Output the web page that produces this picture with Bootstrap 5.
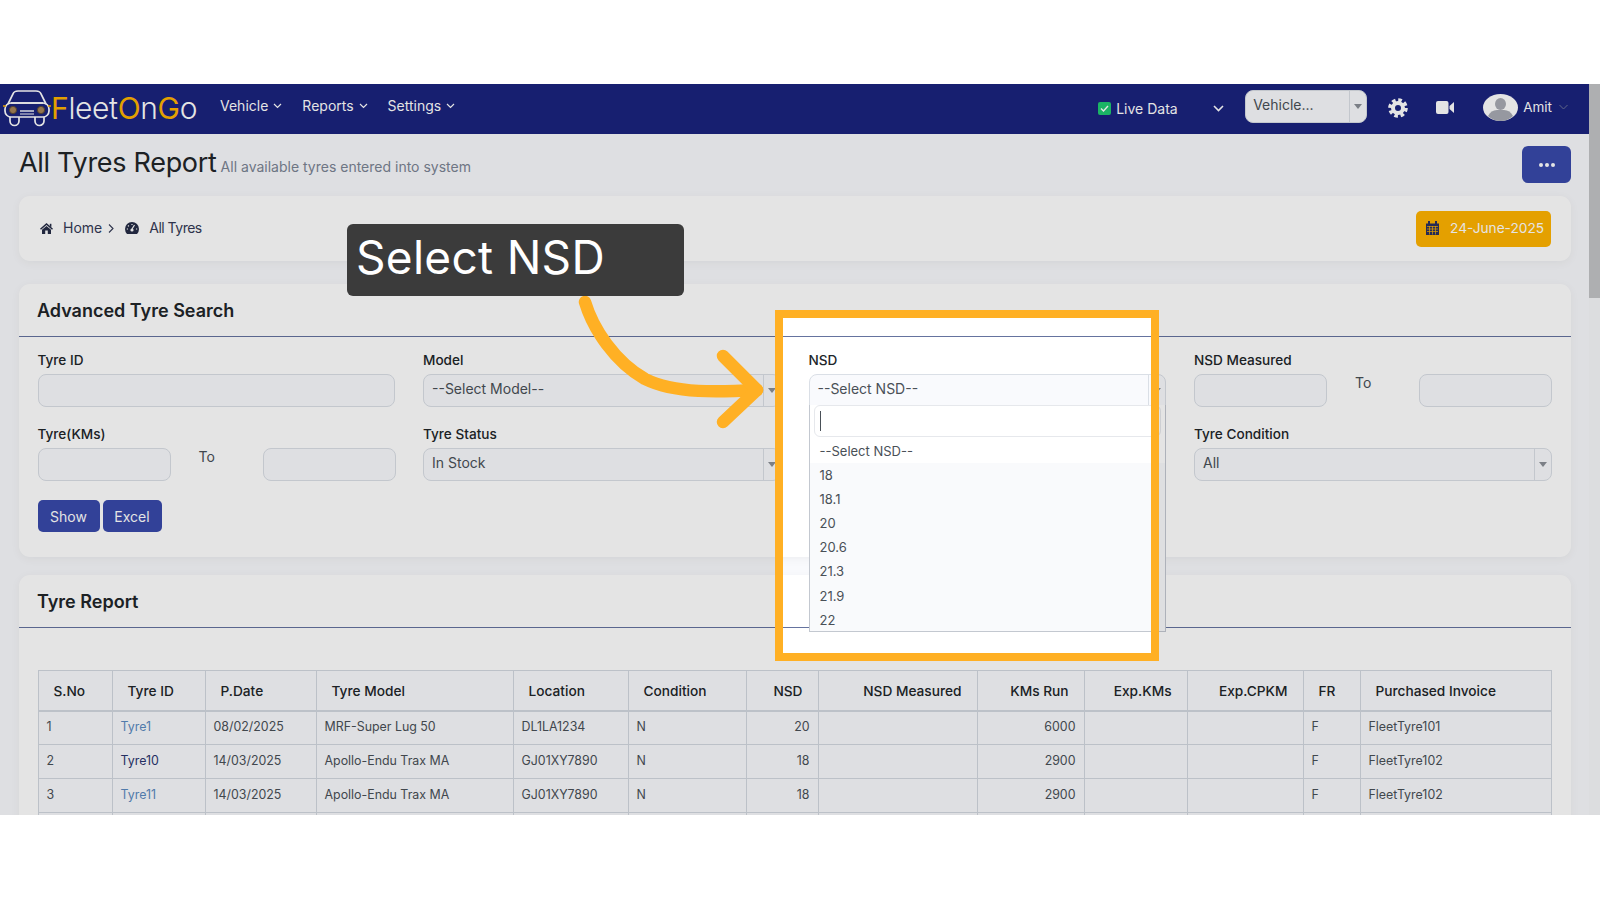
<!DOCTYPE html>
<html lang="en"><head><meta charset="utf-8"><title>All Tyres Report</title>
<link href="https://cdn.jsdelivr.net/npm/bootstrap@5.3.0/dist/css/bootstrap.min.css" rel="stylesheet">
<style>
html,body{height:100%;overflow:hidden}
body{background:#fff;font-family:Inter,"Noto Sans",sans-serif;font-size:14px;color:#495057;padding-top:84px}
.frame{height:731px;overflow:hidden;position:relative;display:flex;background:#f9fafd}
.page{width:1589px;flex:none;overflow:hidden}
.sbar{flex:1;background:#f7f8fa}
.thumb{height:214px;background:#c3c4c6}
.topnav{height:50px;background:#1a237e;padding:0;flex-wrap:nowrap}
.logo{display:flex;align-items:center;padding-left:3px;width:220px;margin-top:-2px}
.logo .word{font-size:30px;font-weight:300;letter-spacing:-.35px;color:#fff;margin-left:0;line-height:1}
.logo b{font-weight:400;color:#ffb300}
.navbar-expand .navbar-nav .nav-link.top{color:#fff;font-size:14px;padding:0;display:flex;align-items:center;gap:5px;margin-right:20px;margin-top:-7px}
.rightbar{margin-left:auto;display:flex;align-items:center}
.live{display:flex;align-items:center;gap:5px;color:#fff;width:147px;margin-top:-1px}
.live .chev{margin-right:21px}
.check{width:13px;height:13px;background:#1fca72;border-radius:2px;display:flex}
.vsel{width:122px;height:31px;margin-right:21px;margin-top:-5px;background:#f9fafd;color:#495057}
.vsel .txt{margin-top:-1px;margin-left:-1px}
.gear{margin-right:28px;margin-top:-3px}.cam{margin-right:29px;margin-top:-3px}
.amit{color:#fff;margin:-3px 7px 0 5px;font-size:13.5px}
.me{margin-right:21px;margin-top:-4px}
.avatar{margin-top:-4px}
.titlerow{height:62px;padding:0 18px 0 19px;display:flex;align-items:flex-start}
.titlerow h1{font-size:27px;font-weight:400;color:#212529;margin:14px 0 0;line-height:30px;letter-spacing:-.3px}
.titlerow small{font-size:14px;color:#7b8494;margin:23px 0 0 4px;line-height:20px}
.dots{margin:12px 0 0 auto;width:49px;height:37px;background:#3949ab;border:0;border-radius:6px;display:flex;align-items:center;justify-content:center;gap:2px;padding:0}
.dots i{width:4px;height:4px;background:#fff;border-radius:50%}
.panel{margin:0 18px 0 19px;background:#fff;border:0;border-radius:11px;box-shadow:0 2px 10px rgba(0,0,0,.05)}
.crumbs{height:65px;display:flex;align-items:center;padding:0 20px 0 21px;color:#343a55;margin-bottom:23px}
.crumbs span{line-height:1;margin-top:-2px}
.crumbs svg{flex:none;margin-top:-1px}
.c-home{margin-left:10px}.c-sep{margin-left:6px}.c-gauge{margin-left:11px}
.c-all{margin-left:10px;letter-spacing:-.5px}
.crumbs .datebtn{margin-left:auto;height:36px;width:135px;background:#ffb300;color:#fff;border:0;border-radius:5px;display:flex;align-items:center;gap:11px;padding:0 0 0 10px;font-size:13.7px;white-space:nowrap}
.panel .card-header{height:53px;background:transparent;border-bottom:1px solid #65739f;border-radius:0;padding:0 18px;display:flex;align-items:center;font-size:18px;font-weight:600;color:#212529}
.search{height:273px;margin-bottom:18px}
.search .card-body{padding:11px 19.5px 0 18.5px}
.search .row{--bs-gutter-x:28px}
.fld label{display:block;font-weight:500;font-size:13.6px;color:#212529;line-height:24px;margin-bottom:2px}
.fld{margin-bottom:15px}
.form-control{height:33px;background:#f9fafd;border:1px solid #dadfe6;border-radius:8px;box-shadow:none}
.range{display:flex}
.range .form-control{flex:0 0 133px;width:133px}
.to{flex:0 0 92px;padding:0 0 0 28px;line-height:18px;color:#495057}
.sel{height:33px;background:#f9fafd;border:1px solid #dadfe6;border-radius:8px;display:flex;align-items:center;padding-left:8px;color:#495057}
.sel .txt{margin-top:-4px}
.sel .cap{margin-left:auto;width:17px;height:100%;border-left:1px solid #dadfe6;display:flex;align-items:center;justify-content:center}
.sel .cap i{border:4px solid transparent;border-top:5px solid #8a8f96;border-bottom:0}
.nsd{position:relative}
.nsd .sel{border-radius:8px 8px 0 0;height:32px}
.drop{position:absolute;top:57px;left:14px;right:14px;height:227px;background:#fff;border:1px solid #c3c8d0;border-top:0;z-index:3;display:flex;flex-direction:column}
.drop input.form-control{height:32px;width:auto;margin:0 4px 2px;flex:none;background:#fff;border:1px solid #e6e8ec;border-radius:6px;padding-left:5px;color:#495057}
.caretbar{width:1px;height:20px;background:#495057;position:absolute;left:10px;top:6px}
.opts{flex:1;list-style:none;margin:0;padding:0;overflow-y:scroll;background:#f9fafc}
.opts li{height:24.1px;line-height:24.1px;padding-left:10px;color:#495057;font-size:13px}
.opts li:first-child{background:#fff}
.opts .pad{height:60px}
.opts::-webkit-scrollbar{width:5px}
.opts::-webkit-scrollbar-track{background:#fff}
.opts::-webkit-scrollbar-thumb{background:#a9acb1}
.actions{margin-top:4px}
.btn-go{height:32px;background:#3949ab;color:#fff;border:0;border-radius:5px;font-size:14px;padding:0;width:62px;margin-right:3px}
.btn-go.x{width:59px}
.report{height:400px}
.report .card-body{padding:42px 19.5px 0 18.5px}
.grid{table-layout:fixed;width:1513px;margin:0;--bs-table-bg:#f9fafd;--bs-table-border-color:#d3d8e0;--bs-table-color:#495057}
.grid,.grid tr,.grid th,.grid td,.grid thead,.grid tbody{border-color:#d3d8e0}
.grid>:not(caption)>*>*{padding:0 8px;height:34px;font-size:12.4px;vertical-align:middle;border-width:1px}
.grid thead th{height:40px;padding:2px 15px 0;font-size:13.7px;font-weight:500;color:#212529;border-bottom-width:2px}
.grid>:not(:first-child){border-top:0}
.grid a{color:#5b8ac0;text-decoration:none}
.grid a.seen{color:#29356e}
.r{text-align:right}
.c1{width:74px}.c2{width:93px}.c3{width:111px}.c4{width:197px}.c5{width:115px}.c6{width:118px}.c7{width:72px}.c8{width:159px}.c9{width:107px}.c10{width:103px}.c11{width:116px}.c12{width:57px}.c13{width:191px}
.hl{position:absolute;left:775px;top:226px;width:384px;height:351px;border:8px solid #ffb024;box-shadow:0 0 0 2000px rgba(0,0,0,.106);z-index:10;pointer-events:none}
.callout{position:absolute;left:347px;top:140px;width:337px;height:72px;background:#3b3b3b;border-radius:6px;color:#fff;font-size:46px;line-height:66px;padding-left:9px;z-index:12;letter-spacing:.3px}
.arrow{position:absolute;left:560px;top:200px;z-index:11}
</style></head><body>
<div class="frame">
<div class="page">
<nav class="navbar navbar-expand topnav">
  <a class="logo text-decoration-none" href="#">
    <svg width="48" height="38" viewBox="0 0 48 38" fill="none" stroke="#fff" stroke-width="1.7">
      <path d="M5 15 10 5Q11 2 15 2H33Q37 2 38 5L43 15"/><path d="M8 14H40"/>
      <rect x="2" y="14" width="44" height="14" rx="6"/>
      <path d="M7 28v4a3 3 0 0 0 9 0v-4M32 28v4a3 3 0 0 0 9 0v-4"/>
      <path d="M17 22H31" stroke-width="1.4"/><path d="M17 25H31" stroke-width="1"/>
      <path d="M0 17H3M45 17H48" stroke="#ffb300"/>
      <circle cx="10" cy="21" r="3.6" fill="#a58358" stroke="#5d4a33" stroke-width="1"/>
      <circle cx="38" cy="21" r="3.6" fill="#a58358" stroke="#5d4a33" stroke-width="1"/>
    </svg>
    <span class="word"><b>F</b>leet<b>O</b>n<b>G</b>o</span>
  </a>
  <div class="navbar-nav">
    <a class="nav-link top" href="#">Vehicle <svg width="9" height="6" viewBox="0 0 9 6" fill="none" stroke="#fff" stroke-width="1.2"><path d="M1 1 4.5 4.5 8 1"/></svg></a>
    <a class="nav-link top" href="#">Reports <svg width="9" height="6" viewBox="0 0 9 6" fill="none" stroke="#fff" stroke-width="1.2"><path d="M1 1 4.5 4.5 8 1"/></svg></a>
    <a class="nav-link top" href="#">Settings <svg width="9" height="6" viewBox="0 0 9 6" fill="none" stroke="#fff" stroke-width="1.2"><path d="M1 1 4.5 4.5 8 1"/></svg></a>
  </div>
  <div class="rightbar">
    <div class="live"><span class="check"><svg width="13" height="13" viewBox="0 0 13 13" fill="none" stroke="#fff" stroke-width="1.4"><path d="M3 6.5 5.5 9 10 4"/></svg></span><span class="flex-grow-1">Live Data</span>
      <svg class="chev" width="11" height="7" viewBox="0 0 11 7" fill="none" stroke="#fff" stroke-width="1.6"><path d="M1 1 5.5 5.5 10 1"/></svg></div>
    <div class="sel vsel"><span class="txt">Vehicle...</span><span class="cap"><i></i></span></div>
    <svg class="gear" width="20" height="20" viewBox="0 0 20 20" fill="none" stroke="#fff"><circle cx="10" cy="10" r="8" stroke-width="3.6" stroke-dasharray="3.6 2.68"/><circle cx="10" cy="10" r="5" stroke-width="4"/></svg>
    <svg class="cam" width="18" height="13" viewBox="0 0 18 13" fill="#fff"><rect x="0" y="0" width="12.5" height="13" rx="2"/><path d="M13.5 5 18 1V12L13.5 8Z"/></svg>
    <svg class="avatar" width="35" height="27" viewBox="0 0 35 27"><ellipse cx="17.500" cy="13.500" rx="17.500" ry="13.500" fill="#fff"/><ellipse cx="17.500" cy="10" rx="5.500" ry="6" fill="#a8abb3"/><path d="M5 22Q8 16 14 16H21Q27 16 30 22 25 27 17.500 27 10 27 5 22Z" fill="#a8abb3"/></svg>
    <span class="amit">Amit</span>
    <svg class="me" width="9" height="6" viewBox="0 0 9 6" fill="none" stroke="#6d7398" stroke-width="1"><path d="M.5 1 4.500 5 8.500 1"/></svg>
  </div>
</nav>
<div class="titlerow"><h1>All Tyres Report</h1><small>All available tyres entered into system</small>
  <button class="btn dots" aria-label="More"><i></i><i></i><i></i></button></div>

<div class="card panel crumbs flex-row">
  <svg width="13" height="11" viewBox="0 0 13 11" fill="#262c46"><path d="M6.500 0 13 5.700 12 6.700 6.500 2 1 6.700 0 5.700 Z"/><path d="M2 6.800 6.500 3 11 6.800V11H7.800V7.500H5.200V11H2Z"/><rect x="9.800" y=".8" width="1.600" height="3"/></svg>
  <span class="c-home">Home</span>
  <svg class="c-sep" width="6" height="9" viewBox="0 0 6 9" fill="none" stroke="#343a55" stroke-width="1.100"><path d="M1 .5 5 4.500 1 8.500"/></svg>
  <svg class="c-gauge" width="14" height="12" viewBox="0 0 14 12"><path d="M7 0A7 7 0 0 0 0 7Q0 10 2 12H12Q14 10 14 7A7 7 0 0 0 7 0Z" fill="#262c46"/><path d="M7 7 9.500 3M3 3.500 3.800 4.300M7 2V3M1.800 7H3M11 7H12.200" stroke="#fff" stroke-width="1.200"/><circle cx="7" cy="8" r="1.600" fill="#fff"/></svg>
  <span class="c-all">All Tyres</span>
  <button class="btn datebtn"><svg width="13" height="14" viewBox="0 0 13 14"><path d="M0 2.500H13V14H0Z" fill="#2a3060"/><path d="M3 0V3M10 0V3" stroke="#2a3060" stroke-width="2"/><path d="M1 5.500H12M1 8H12M1 10.500H12M3.500 5V13.500M6.500 5V13.500M9.500 5V13.500" stroke="#ffb300" stroke-width=".7"/></svg>24-June-2025</button>
</div>

<div class="card panel search">
  <div class="card-header">Advanced Tyre Search</div>
  <div class="card-body">
    <div class="row">
      <div class="col-3">
        <div class="fld"><label>Tyre ID</label><input class="form-control" type="text"></div>
        <div class="fld"><label>Tyre(KMs)</label><div class="range"><input class="form-control" type="text"><span class="to">To</span><input class="form-control" type="text"></div></div>
      </div>
      <div class="col-3">
        <div class="fld"><label>Model</label><div class="sel"><span class="txt">--Select Model--</span><span class="cap"><i></i></span></div></div>
        <div class="fld"><label>Tyre Status</label><div class="sel"><span class="txt">In Stock</span><span class="cap"><i></i></span></div></div>
      </div>
      <div class="col-3 nsd">
        <div class="fld"><label>NSD</label><div class="sel"><span class="txt">--Select NSD--</span><span class="cap"><i></i></span></div></div>
        <div class="drop">
          <input class="form-control" type="text" aria-label="Search NSD"><span class="caretbar"></span>
          <ul class="opts"><li>--Select NSD--</li><li>18</li><li>18.1</li><li>20</li><li>20.6</li><li>21.3</li><li>21.9</li><li>22</li><li class="pad"></li></ul>
        </div>
      </div>
      <div class="col-3">
        <div class="fld"><label>NSD Measured</label><div class="range"><input class="form-control" type="text"><span class="to">To</span><input class="form-control" type="text"></div></div>
        <div class="fld"><label>Tyre Condition</label><div class="sel"><span class="txt">All</span><span class="cap"><i></i></span></div></div>
      </div>
    </div>
    <div class="d-flex actions"><button class="btn btn-go">Show</button><button class="btn btn-go x">Excel</button></div>
  </div>
</div>

<div class="card panel report">
  <div class="card-header">Tyre Report</div>
  <div class="card-body">
    <table class="table table-bordered grid">
      <colgroup><col class="c1"><col class="c2"><col class="c3"><col class="c4"><col class="c5"><col class="c6"><col class="c7"><col class="c8"><col class="c9"><col class="c10"><col class="c11"><col class="c12"><col class="c13"></colgroup>
      <thead><tr><th>S.No</th><th>Tyre ID</th><th>P.Date</th><th>Tyre Model</th><th>Location</th><th>Condition</th><th class="r">NSD</th><th class="r">NSD Measured</th><th class="r">KMs Run</th><th class="r">Exp.KMs</th><th class="r">Exp.CPKM</th><th>FR</th><th>Purchased Invoice</th></tr></thead>
      <tbody>
        <tr><td>1</td><td><a href="#">Tyre1</a></td><td>08/02/2025</td><td>MRF-Super Lug 50</td><td>DL1LA1234</td><td>N</td><td class="r">20</td><td></td><td class="r">6000</td><td></td><td></td><td>F</td><td>FleetTyre101</td></tr>
        <tr><td>2</td><td><a class="seen" href="#">Tyre10</a></td><td>14/03/2025</td><td>Apollo-Endu Trax MA</td><td>GJ01XY7890</td><td>N</td><td class="r">18</td><td></td><td class="r">2900</td><td></td><td></td><td>F</td><td>FleetTyre102</td></tr>
        <tr><td>3</td><td><a href="#">Tyre11</a></td><td>14/03/2025</td><td>Apollo-Endu Trax MA</td><td>GJ01XY7890</td><td>N</td><td class="r">18</td><td></td><td class="r">2900</td><td></td><td></td><td>F</td><td>FleetTyre102</td></tr>
        <tr><td></td><td></td><td></td><td></td><td></td><td></td><td></td><td></td><td></td><td></td><td></td><td></td><td></td></tr>
      </tbody>
    </table>
  </div>
</div>
</div>
<div class="sbar"><div class="thumb"></div></div>

<div class="hl"></div>
<svg class="arrow" width="220" height="160" viewBox="0 0 220 160" fill="none" stroke="#ffb024" stroke-width="12.500" stroke-linecap="round" stroke-linejoin="round">
  <path d="M25 18C33 45 55 78 85 95C115 110 160 108 197 106"/><path d="M163 72 197 106 163 138"/>
</svg>
<div class="callout">Select NSD</div>
</div>
<script src="https://cdn.jsdelivr.net/npm/bootstrap@5.3.0/dist/js/bootstrap.bundle.min.js"></script>
</body></html>
